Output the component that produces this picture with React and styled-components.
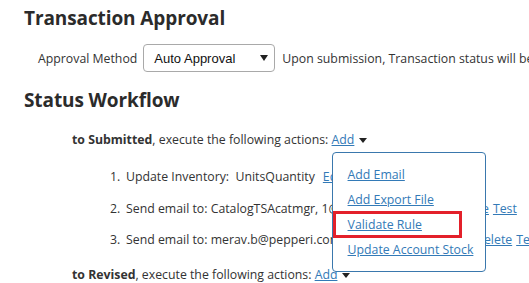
import React from "react";
import styled, { createGlobalStyle } from "styled-components";

const Global = createGlobalStyle`
  html, body { margin: 0; padding: 0; background: #fff; }
  body {
    font-family: "Open Sans", "Noto Sans", sans-serif;
    font-size: 12.3px;
    color: #333;
    overflow: hidden;
  }
`;

const Page = styled.div`
  width: 529px;
  height: 283px;
  padding: 0 24px;
  box-sizing: border-box;
  overflow: hidden;
  white-space: nowrap;
`;

const Heading = styled.h2`
  margin: 0;
  margin-top: ${(p) => p.$top}px;
  font-size: 19px;
  font-weight: 700;
  line-height: 28px;
  color: #2b2b2b;
  letter-spacing: -0.1px;
`;

const MethodRow = styled.div`
  display: flex;
  align-items: center;
  height: 28px;
  margin-top: 12px;
  padding-left: 14px;
`;

const Label = styled.span`
  flex-shrink: 0;
  margin-right: 6px;
`;

const Select = styled.div`
  flex-shrink: 0;
  box-sizing: border-box;
  width: 132px;
  height: 28px;
  border: 1px solid #a9a9a9;
  border-radius: 4px;
  display: flex;
  align-items: center;
  justify-content: space-between;
  padding: 0 6px 0 10px;
  font-family: "Liberation Sans", Arial, sans-serif;
  font-size: 13px;
  color: #111;
  margin-right: 7px;
`;

const Caret = styled.span`
  display: inline-block;
  width: 0;
  height: 0;
  border-left: ${(p) => p.$w}px solid transparent;
  border-right: ${(p) => p.$w}px solid transparent;
  border-top: ${(p) => p.$h}px solid #222;
  margin-left: ${(p) => p.$ml || 0}px;
  vertical-align: middle;
`;

const Rule = styled.div`
  padding-left: 48px;
  line-height: 20px;
  margin-top: ${(p) => p.$top}px;
`;

const Link = styled.a`
  color: #337ab7;
  text-decoration: underline;
  cursor: pointer;
  margin-left: ${(p) => p.$ml || 0}px;
`;

const AddWrap = styled.span`
  position: relative;
  display: inline-block;
`;

const Menu = styled.div`
  position: absolute;
  left: 0;
  top: calc(100% + 2px);
  box-sizing: border-box;
  width: 154px;
  border: 1px solid #3a78ad;
  border-radius: 4px;
  background: #fff;
  padding: 9px 0 9px 15px;
  z-index: 2;
`;

const MenuItem = styled.div`
  position: relative;
  line-height: 25px;
  height: 25px;
  font-size: 12.3px;
`;

const Highlight = styled.div`
  position: absolute;
  left: -15px;
  top: -1px;
  width: 129px;
  height: 27px;
  box-sizing: border-box;
  border: 3px solid #e3202a;
`;

const Actions = styled.ol`
  margin: 11px 0 0 0;
  padding: 0 0 0 86px;
  list-style: none;
`;

const Action = styled.li`
  line-height: 31.5px;
  height: 31.5px;
  display: flex;
  & > * { flex-shrink: 0; }
`;

const Num = styled.span`
  width: 16px;
`;

const Body = styled.span`
  margin-right: ${(p) => p.$gap}px;
`;

export default function App() {
  return (
    <>
      <Global />
      <Page>
        <Heading $top={4}>Transaction Approval</Heading>
        <MethodRow>
          <Label>Approval Method</Label>
          <Select>
            <span>Auto Approval</span>
            <Caret $w={4} $h={6} />
          </Select>
          <span>Upon submission, Transaction status will be set to Submitted</span>
        </MethodRow>
        <Heading $top={14}>Status Workflow</Heading>
        <Rule $top={16}>
          <b>to Submitted</b>, execute the following actions:{" "}
          <AddWrap>
            <Link>Add</Link>
            <Menu>
              <MenuItem><Link>Add Email</Link></MenuItem>
              <MenuItem><Link>Add Export File</Link></MenuItem>
              <MenuItem>
                <Highlight />
                <Link>Validate Rule</Link>
              </MenuItem>
              <MenuItem><Link>Update Account Stock</Link></MenuItem>
            </Menu>
          </AddWrap>
          <Caret $w={4} $h={5} $ml={5} />
        </Rule>
        <Actions>
          <Action>
            <Num>1.</Num>
            <Body $gap={8}>Update Inventory:&nbsp; UnitsQuantity</Body>
            <Link>Edit</Link>
          </Action>
          <Action>
            <Num>2.</Num>
            <Body $gap={12}>Send email to: CatalogTSAcatmgr, 1@pepperi.com</Body>
            <Link>Edit</Link>
            <Link $ml={6}>Delete</Link>
            <Link $ml={4}>Test</Link>
          </Action>
          <Action>
            <Num>3.</Num>
            <Body $gap={6}>Send email to: merav.b@pepperi.com, ts@pepperi.com</Body>
            <Link>Edit</Link>
            <Link $ml={6}>Delete</Link>
            <Link $ml={4}>Test</Link>
          </Action>
        </Actions>
        <Rule $top={9.5}>
          <b>to Revised</b>, execute the following actions: <Link>Add</Link>
          <Caret $w={4} $h={5} $ml={5} />
        </Rule>
      </Page>
    </>
  );
}
